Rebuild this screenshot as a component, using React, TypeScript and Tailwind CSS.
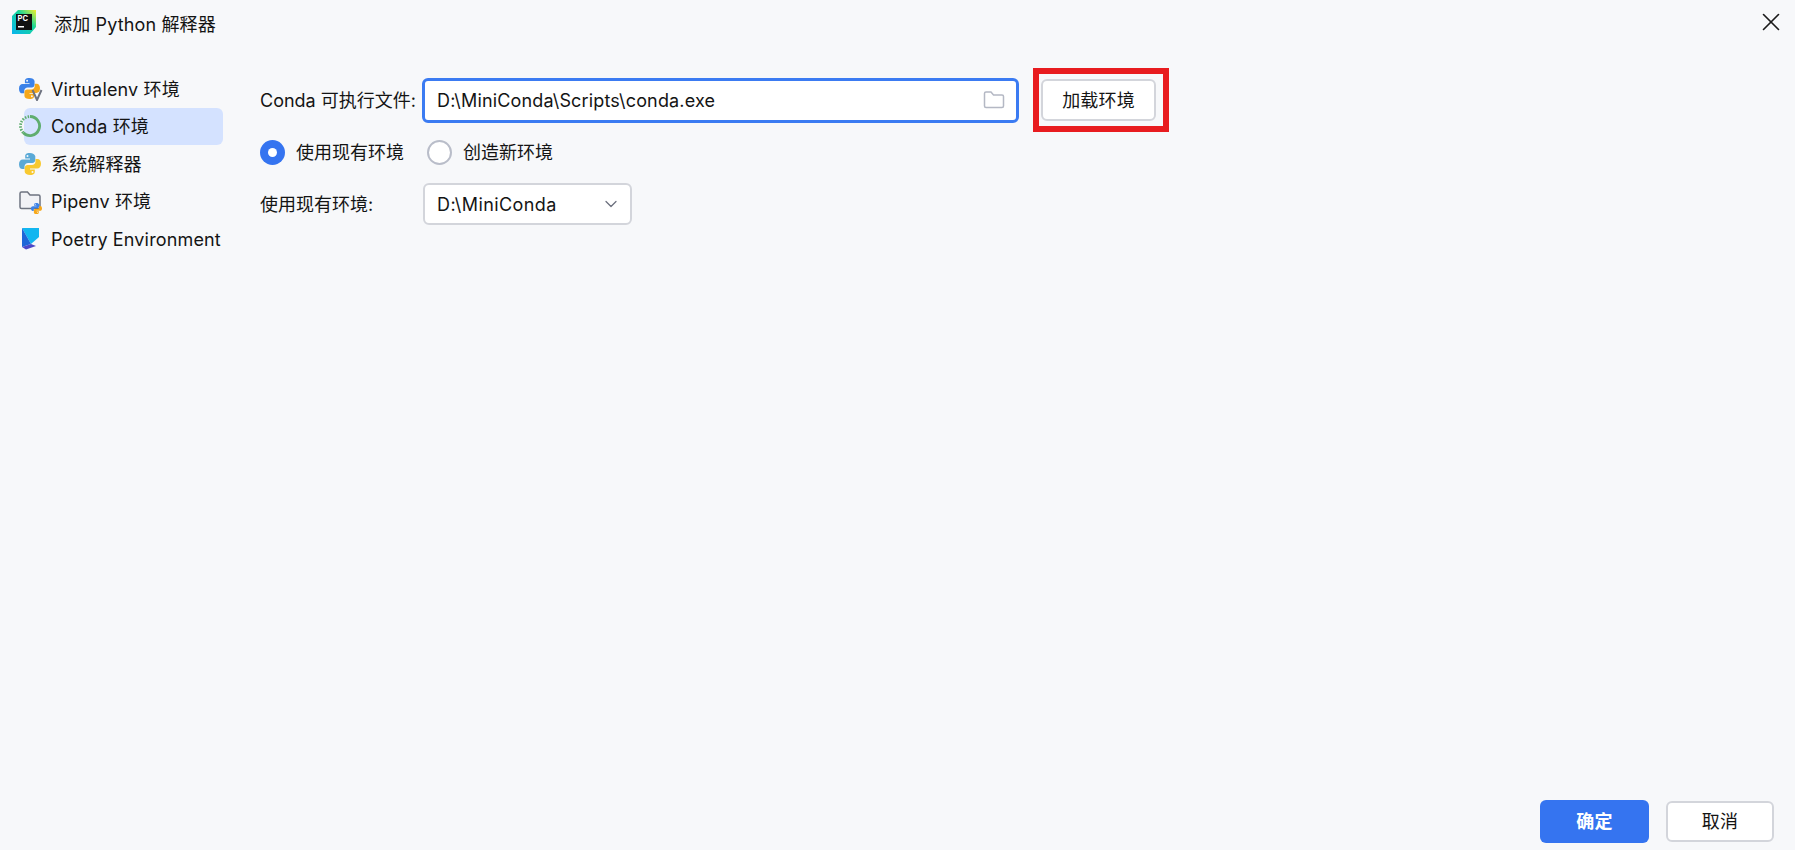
import { X, ChevronDown } from "lucide-react";

const font = "font-['Inter','Noto_Sans_CJK_SC',sans-serif]";

function PyIcon({ a = "#3B8FDB", b = "#F6B21B" }: { a?: string; b?: string }) {
  return (
    <svg viewBox="1 1 22 22" className="w-full h-full">
      <path fill={a} d="M11.8 1C8 1 7.2 2.6 7.2 4.2V6.5H12V7.4H4.8C2.6 7.4 1 9 1 12.2s1.4 4.9 3.5 4.9h2v-2.6c0-2 1.6-3.6 3.6-3.6h4.3c1.6 0 2.9-1.3 2.9-2.9V4.2C16.800 2.300 15 1 11.800 1zM9.500 2.900a1 1 0 1 1 0 2 1 1 0 0 1 0-2z" />
      <path fill={b} d="M12.200 23c3.800 0 4.600-1.600 4.600-3.200v-2.300H12v-.9h7.200c2.200 0 3.800-1.600 3.800-4.800s-1.400-4.900-3.500-4.900h-2v2.600c0 2-1.600 3.600-3.600 3.600H9.600c-1.600 0-2.900 1.300-2.900 2.900v3.800C6.700 21.700 9 23 12.200 23zm2.300-1.900a1 1 0 1 1 0-2 1 1 0 0 1 0 2z" />
    </svg>
  );
}

function PyCharmLogo() {
  return (
    <svg viewBox="0 0 24 24" className="w-6 h-6 shrink-0">
      <defs>
        <linearGradient id="pc" x1="0" y1="1" x2="1" y2="0">
          <stop offset="0" stopColor="#08B4EE" />
          <stop offset="0.6" stopColor="#16D69A" />
          <stop offset="1" stopColor="#F5F02A" />
        </linearGradient>
      </defs>
      <path fill="url(#pc)" d="M6 0h18v17l-6 7H0V6z" />
      <rect x="4" y="4" width="16" height="16" fill="#111" />
      <text x="5.500" y="11" fontSize="7.500" fontWeight="700" fill="#fff" fontFamily="Inter">PC</text>
      <rect x="6" y="16" width="6" height="1.500" fill="#fff" />
    </svg>
  );
}

function VirtualenvIcon() {
  return (
    <div className="relative w-[21px] h-[21px]">
      <PyIcon a="#3B82E8" b="#F6A81B" />
      <svg viewBox="0 0 12 12" className="absolute right-[-3px] bottom-[-2px] w-3 h-3">
        <path d="M1.500 1 6 11l4.500-10" fill="none" stroke="#6E7380" strokeWidth="2" />
      </svg>
    </div>
  );
}

function CondaIcon() {
  return (
    <svg viewBox="0 0 22 22" className="w-[22px] h-[22px]">
      <path d="M11 1.500a9.500 9.500 0 1 1-6.700 16.200" fill="none" stroke="#5FAD6F" strokeWidth="2.800" />
      <path d="M4.300 17.700A9.500 9.500 0 0 1 11 1.500" fill="none" stroke="#5FAD6F" strokeWidth="2.800" strokeDasharray="1.500 1.300" />
    </svg>
  );
}

function PipenvIcon() {
  return (
    <div className="relative w-[22px] h-[22px]">
      <svg viewBox="0 0 22 22" className="w-full h-full">
        <path d="M1 17V3.500A1.500 1.500 0 0 1 2.500 2h6l2.500 3h8.500A1.500 1.500 0 0 1 21 6.500V17a1.500 1.500 0 0 1-1.500 1.500h-17A1.500 1.500 0 0 1 1 17z" fill="#F1F2F6" stroke="#6E7380" strokeWidth="1.500" />
      </svg>
      <div className="absolute right-[-1px] bottom-[-2px] w-[11px] h-[11px]">
        <PyIcon a="#3B82E8" b="#F6A81B" />
      </div>
    </div>
  );
}

function PoetryIcon() {
  return (
    <svg viewBox="0 0 22 22" className="w-[22px] h-[22px]">
      <path d="M3 0h17v9L12 16z" fill="#12B6F0" />
      <path d="M3 0l9 16-9 3z" fill="#1D66D8" />
      <path d="M3 19l9-3 5 2-10 3.500z" fill="#4A48C8" />
    </svg>
  );
}

const navItems = [
  { label: "Virtualenv 环境", icon: <VirtualenvIcon /> },
  { label: "Conda 环境", icon: <CondaIcon />, active: true },
  { label: "系统解释器", icon: <div className="w-[22px] h-[22px]"><PyIcon a="#5AA9D6" b="#F8C930" /></div> },
  { label: "Pipenv 环境", icon: <PipenvIcon /> },
  { label: "Poetry Environment", icon: <PoetryIcon /> },
];

export default function App() {
  return (
    <div className={`h-[850px] w-[1795px] flex flex-col overflow-hidden bg-[#f7f8fa] text-[18px] tracking-[0.15px] text-[#141414] ${font}`}>
      {/* Title bar */}
      <header className="h-[44px] shrink-0 flex items-center pl-[12px] pr-[9px]">
        <PyCharmLogo />
        <span className="ml-[18px] mt-[6px] leading-none">添加 Python 解释器</span>
        <X size={30} strokeWidth={1.3} className="ml-auto text-[#1a1a1a]" />
      </header>

      <div className="flex flex-1 min-h-0">
        {/* Left nav */}
        <nav className="w-[240px] shrink-0 pt-[26px] pl-[24px] pr-[17px]">
          {navItems.map((item) => (
            <div
              key={item.label}
              className={`h-[37.500px] flex items-center rounded-[6px] whitespace-nowrap ${item.active ? "bg-[#d4e2ff]" : ""}`}
            >
              <div className="ml-[-5px] w-[22px] h-[22px] shrink-0">{item.icon}</div>
              <span className="ml-[10px] pt-[2px] leading-none">{item.label}</span>
            </div>
          ))}
        </nav>

        {/* Form */}
        <main className="flex-1 pt-[24px] pl-[20px]">
          <div className="flex items-center">
            <span className="w-[162px] shrink-0 whitespace-nowrap tracking-normal">Conda 可执行文件:</span>
            <div className="w-[597px] h-[45px] flex items-center bg-white border-[3px] border-[#3b7bf2] rounded-[6px] pl-[12px] pr-[11px]">
              <span>D:\MiniConda\Scripts\conda.exe</span>
              <svg viewBox="0 0 22 20" className="ml-auto w-[22px] h-[20px]">
                <path d="M1.500 16V3.500a1.500 1.500 0 0 1 1.500-1.500h5l2.500 3h8.500a1.500 1.500 0 0 1 1.500 1.500V16a1.500 1.500 0 0 1-1.500 1.500H3A1.500 1.500 0 0 1 1.500 16z" fill="none" stroke="#b4b8c4" strokeWidth="1.500" />
              </svg>
            </div>
            <div className="ml-[14px] border-[6px] border-[#e81c1f] pt-[5px] pb-[5px] pl-[2px] pr-[7px]">
              <button className="block w-[115px] h-[42px] pt-[1px] bg-white border-2 border-[#d3d5db] rounded-[6px] leading-none">加载环境</button>
            </div>
          </div>

          <div className="flex items-center mt-[1px] h-[38px]">
            <span className="w-[25px] h-[25px] rounded-full bg-[#3574f0] flex items-center justify-center">
              <span className="w-[9px] h-[9px] rounded-full bg-white" />
            </span>
            <span className="ml-[11px] w-[131px] pt-[1px] tracking-normal">使用现有环境</span>
            <span className="w-[25px] h-[25px] rounded-full bg-white border-2 border-[#b9bdc9]" />
            <span className="ml-[11px] pt-[1px] tracking-normal">创造新环境</span>
          </div>

          <div className="flex items-center mt-[12px]">
            <span className="w-[163px] shrink-0 tracking-normal">使用现有环境:</span>
            <div className="w-[209px] h-[42px] flex items-center bg-white border-2 border-[#d3d5db] rounded-[6px] pl-[12px] pr-[9px]">
              <span className="tracking-[0.4px]">D:\MiniConda</span>
              <ChevronDown size={20} strokeWidth={1.5} className="ml-auto text-[#6c707e]" />
            </div>
          </div>
        </main>
      </div>

      {/* Footer */}
      <footer className="h-[50px] shrink-0 flex items-start justify-end pr-[21px]">
        <button className="w-[109px] h-[43px] pt-[1px] bg-[#3574f0] text-white font-semibold rounded-[6px] leading-none">确定</button>
        <button className="ml-[17px] mt-[1px] w-[108px] h-[41px] pt-[1px] bg-white border-2 border-[#d3d5db] rounded-[6px] leading-none">取消</button>
      </footer>
    </div>
  );
}
